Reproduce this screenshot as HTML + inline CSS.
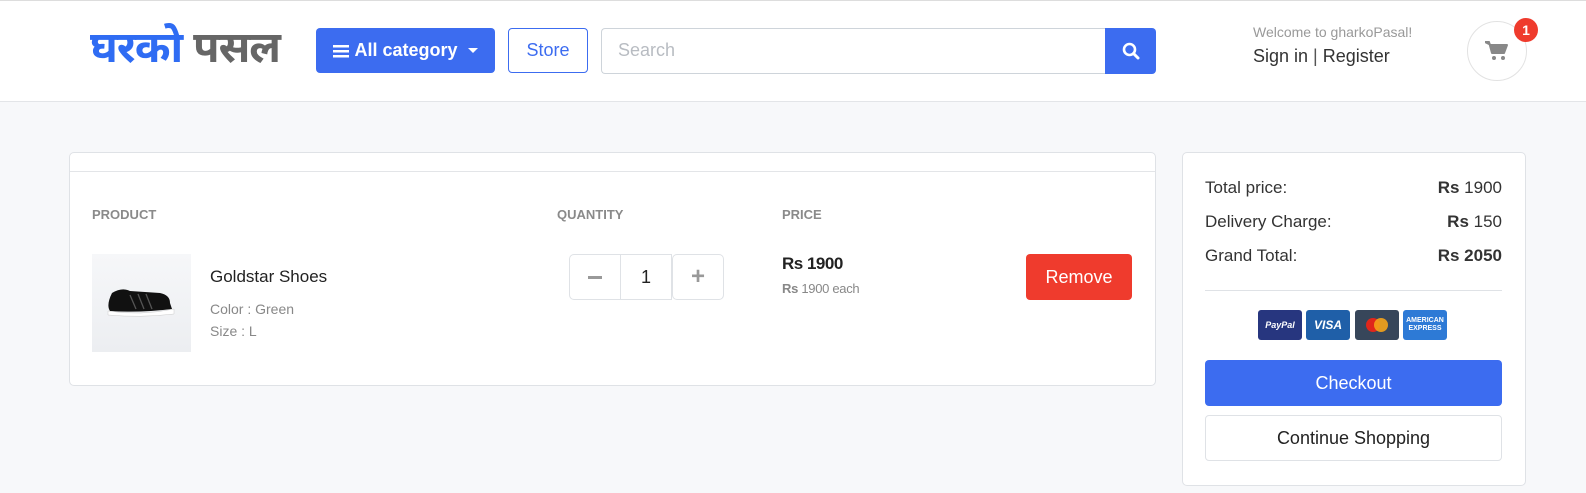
<!DOCTYPE html>
<html><head><meta charset="utf-8"><style>
*{box-sizing:border-box;margin:0;padding:0}
body{width:1586px;height:493px;background:#f7f8fa;font-family:"Liberation Sans",sans-serif;position:relative;overflow:hidden;color:#222}
.a{position:absolute}
#hdr{left:0;top:0;width:1586px;height:102px;background:#fff;border-top:1px solid #ddd;border-bottom:1px solid #e3e5e8}
.card{background:#fff;border:1px solid #dfe2e6;border-radius:5px}
.btnb{background:#3c6cf0;color:#fff;border-radius:4px;display:flex;align-items:center;justify-content:center}
.h{font-size:13px;font-weight:bold;color:#8a8a8a}
.row{left:1205px;width:297px;font-size:17px;display:flex;justify-content:space-between;color:#333}
.pay{top:310px;width:44px;height:30px;border-radius:3px;color:#fff;font-weight:bold;font-style:italic;display:flex;align-items:center;justify-content:center}
</style></head><body>
<div id="hdr" class="a"></div>
<div class="a" style="left:90px;top:23px;font-size:43px;font-weight:bold;font-family:'Liberation Sans','Noto Sans Devanagari','Lohit Devanagari',sans-serif;white-space:nowrap;letter-spacing:-1px"><span style="color:#2f6cf3">घरको</span> <span style="color:#666">पसल</span></div>
<div class="a btnb" style="left:316px;top:28px;width:179px;height:45px;font-size:18px;font-weight:bold">
<svg width="16" height="14" style="margin-right:5px"><rect y="1" width="16" height="2.5" fill="#fff"/><rect y="6" width="16" height="2.5" fill="#fff"/><rect y="11" width="16" height="2.5" fill="#fff"/></svg>All category<span style="margin-left:10px;border-left:5px solid transparent;border-right:5px solid transparent;border-top:5px solid #fff"></span></div>
<div class="a" style="left:508px;top:28px;width:80px;height:45px;border:1px solid #3c6cf0;border-radius:4px;color:#3c6cf0;font-size:18px;display:flex;align-items:center;justify-content:center">Store</div>
<div class="a" style="left:601px;top:28px;width:505px;height:46px;border:1px solid #ced4da;border-right:none;border-radius:4px 0 0 4px;font-size:18px;color:#b8bcc2;padding:11px 16px">Search</div>
<div class="a btnb" style="left:1105px;top:28px;width:51px;height:46px;border-radius:0 4px 4px 0"><svg width="18" height="18"><circle cx="7.5" cy="7.5" r="5.5" stroke="#fff" stroke-width="2.6" fill="none"/><line x1="11.5" y1="11.5" x2="16" y2="16" stroke="#fff" stroke-width="3" stroke-linecap="round"/></svg></div>
<div class="a" style="left:1253px;top:24px;font-size:14px;color:#999">Welcome to gharkoPasal!</div>
<div class="a" style="left:1253px;top:46px;font-size:18px;color:#333">Sign in <span style="color:#555">|</span> Register</div>
<div class="a" style="left:1467px;top:21px;width:60px;height:60px;border:1px solid #e2e2e2;border-radius:50%;display:flex;align-items:center;justify-content:center"><svg width="24" height="22" viewBox="0 0 24 22"><path d="M0 2h4l3 11h12l3-8H6z" fill="#888" stroke="#888" stroke-width="2" stroke-linejoin="round"/><circle cx="9" cy="18" r="2" fill="#888"/><circle cx="18" cy="18" r="2" fill="#888"/></svg></div>
<div class="a" style="left:1514px;top:18px;width:24px;height:24px;border-radius:50%;background:#ef3b2d;color:#fff;font-size:14px;font-weight:bold;display:flex;align-items:center;justify-content:center">1</div>

<div class="a card" style="left:69px;top:152px;width:1087px;height:234px"></div>
<div class="a" style="left:70px;top:171px;width:1085px;height:1px;background:#e3e5e8"></div>
<div class="a h" style="left:92px;top:207px">PRODUCT</div>
<div class="a h" style="left:557px;top:207px">QUANTITY</div>
<div class="a h" style="left:782px;top:207px">PRICE</div>
<div class="a" style="left:92px;top:254px;width:99px;height:98px;background:linear-gradient(#f6f7f9,#eceef1)"></div>
<svg class="a" style="left:100px;top:285px" width="80" height="35"><path d="M12 8 Q22 2 30 6 L60 8 Q70 10 70 18 L72 24 Q40 28 10 26 Q6 20 12 8Z" fill="#111"/><path d="M8 26 Q40 31 74 24 L74 29 Q40 33 8 30Z" fill="#fff" stroke="#ccc" stroke-width=".5"/><path d="M30 10l6 14M38 9l6 15M46 9l6 15" stroke="#555" stroke-width="1.3"/></svg>
<div class="a" style="left:210px;top:267px;font-size:17px;color:#222">Goldstar Shoes</div>
<div class="a" style="left:210px;top:301px;font-size:14px;color:#888">Color : Green</div>
<div class="a" style="left:210px;top:323px;font-size:14px;color:#888">Size : L</div>
<div class="a" style="left:569px;top:254px;width:52px;height:46px;border:1px solid #dfe2e6;border-radius:5px 0 0 5px;display:flex;align-items:center;justify-content:center"><div style="width:14px;height:3px;background:#999"></div></div>
<div class="a" style="left:620px;top:254px;width:52px;height:46px;border:1px solid #dfe2e6;font-size:18px;display:flex;align-items:center;justify-content:center">1</div>
<div class="a" style="left:672px;top:254px;width:52px;height:46px;border:1px solid #dfe2e6;border-radius:5px;display:flex;align-items:center;justify-content:center;font-size:24px;font-weight:bold;color:#999">+</div>
<div class="a" style="left:782px;top:254px;font-size:17px;font-weight:bold;letter-spacing:-.5px">Rs 1900</div>
<div class="a" style="left:782px;top:281px;font-size:13px;color:#888;letter-spacing:-.3px"><b>Rs</b> 1900 each</div>
<div class="a" style="left:1026px;top:254px;width:106px;height:46px;background:#ef3b2d;border-radius:4px;color:#fff;font-size:18px;display:flex;align-items:center;justify-content:center">Remove</div>

<div class="a card" style="left:1182px;top:152px;width:344px;height:334px"></div>
<div class="a row" style="top:178px"><span>Total price:</span><span><b>Rs</b> 1900</span></div>
<div class="a row" style="top:212px"><span>Delivery Charge:</span><span><b>Rs</b> 150</span></div>
<div class="a row" style="top:246px"><span>Grand Total:</span><b>Rs 2050</b></div>
<div class="a" style="left:1205px;top:290px;width:297px;height:1px;background:#dfe2e6"></div>
<div class="a pay" style="left:1258px;background:#27367f;font-size:9px">PayPal</div>
<div class="a pay" style="left:1306px;background:#1f5fa8;font-size:12px">VISA</div>
<div class="a pay" style="left:1355px;background:#37465a"><svg width="30" height="20"><circle cx="11" cy="10" r="7" fill="#e0261b"/><circle cx="19" cy="10" r="7" fill="#f5a31a" opacity=".9"/></svg></div>
<div class="a pay" style="left:1403px;background:#2d7ad6;font-size:7px;font-style:normal;line-height:8px;text-align:center">AMERICAN<br>EXPRESS</div>
<div class="a btnb" style="left:1205px;top:360px;width:297px;height:46px;font-size:18px">Checkout</div>
<div class="a" style="left:1205px;top:415px;width:297px;height:46px;border:1px solid #dfe2e6;border-radius:4px;font-size:18px;display:flex;align-items:center;justify-content:center;background:#fff">Continue Shopping</div>
</body></html>
